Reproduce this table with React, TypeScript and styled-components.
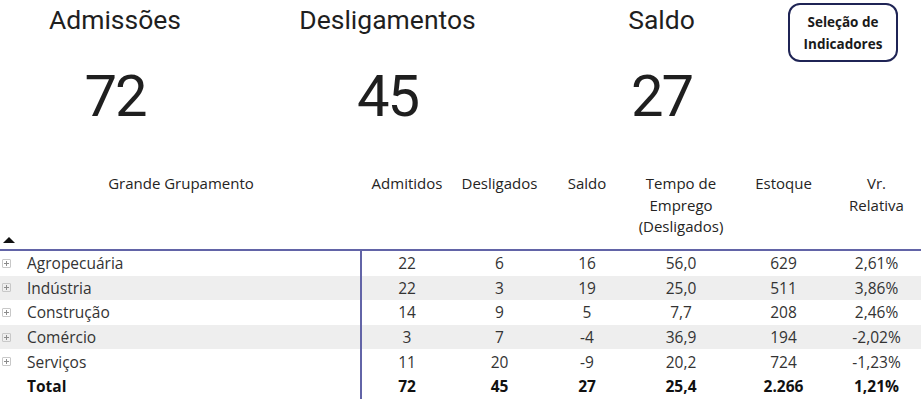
import React from 'react'
import styled, { createGlobalStyle } from 'styled-components'

const GlobalStyle = createGlobalStyle`
  body {
    margin: 0;
    background: #ffffff;
  }
`

const COLS = '362px 90px 95px 80px 108px 97px 89px'
const LINE = '#6264a7'

const Page = styled.div`
  width: 921px;
  height: 409px;
  overflow: hidden;
  background: #ffffff;
  color: #252423;
`
const KpiRow = styled.div`
  display: grid;
  grid-template-columns: 230px 315px 233px 1fr;
  height: 172px;
`
const Kpi = styled.div`
  display: flex;
  flex-direction: column;
  align-items: center;
  font-family: Roboto, 'DejaVu Sans', sans-serif;
  font-weight: 400;
  color: #1f1f1f;
`
const KpiTitle = styled.div`
  font-size: 26.5px;
  line-height: 32px;
  margin-top: 4px;
`
const KpiValue = styled.div`
  font-size: 58px;
  line-height: 70px;
  margin-top: 25px;
  letter-spacing: -2px;
`
const ButtonCell = styled.div`
  padding: 3px 0 0 10px;
`
const IndicatorButton = styled.button`
  width: 110px;
  height: 59px;
  box-sizing: border-box;
  border: 2px solid #1f2455;
  border-radius: 12px;
  background: #ffffff;
  font-family: 'Open Sans', sans-serif;
  font-weight: 700;
  font-size: 13.5px;
  line-height: 22px;
  color: #1a1a1a;
  padding: 0;
`
const Table = styled.div`
  font-family: 'Open Sans', sans-serif;
  color: #252423;
`
const HeaderRow = styled.div`
  display: grid;
  grid-template-columns: ${COLS};
  height: 77px;
  border-bottom: 2px solid ${LINE};
`
const HeadCell = styled.div`
  display: flex;
  flex-direction: column;
  align-items: center;
  text-align: center;
  font-size: 15px;
  line-height: 21.5px;
  padding-top: 1px;
`
const FirstHead = styled(HeadCell)`
  align-items: stretch;
`
const SortArrow = styled.div`
  margin-top: auto;
  margin-bottom: 6px;
  margin-left: 3px;
  width: 0;
  height: 0;
  border-left: 6px solid transparent;
  border-right: 6px solid transparent;
  border-bottom: 6px solid #111111;
`
const Row = styled.div<{ $shaded?: boolean; $bold?: boolean }>`
  display: grid;
  grid-template-columns: ${COLS};
  height: 24.6px;
  align-items: center;
  background: ${({ $shaded }) => ($shaded ? '#eeeeee' : 'transparent')};
  font-size: 15.5px;
  font-weight: ${({ $bold }) => ($bold ? 700 : 400)};
  color: ${({ $bold }) => ($bold ? '#111111' : '#333333')};
`
const LabelCell = styled.div`
  display: flex;
  align-items: center;
  height: 100%;
  border-right: 2px solid ${LINE};
  box-sizing: border-box;
  padding-left: 2px;
  gap: 16px;
`
const Expand = styled.span<{ $hidden?: boolean }>`
  width: 9px;
  height: 9px;
  box-sizing: border-box;
  border: 1px solid #c8c8c8;
  border-radius: 1px;
  position: relative;
  flex: none;
  visibility: ${({ $hidden }) => ($hidden ? 'hidden' : 'visible')};
  &::before,
  &::after {
    content: '';
    position: absolute;
    background: #8c8c8c;
  }
  &::before {
    left: 1px;
    right: 1px;
    top: 3px;
    height: 1px;
  }
  &::after {
    top: 1px;
    bottom: 1px;
    left: 3px;
    width: 1px;
  }
`
const Value = styled.div`
  text-align: center;
`

const kpis = [
  { title: 'Admissões', value: '72' },
  { title: 'Desligamentos', value: '45' },
  { title: 'Saldo', value: '27' },
]

const headers = [
  ['Admitidos'],
  ['Desligados'],
  ['Saldo'],
  ['Tempo de', 'Emprego', '(Desligados)'],
  ['Estoque'],
  ['Vr.', 'Relativa'],
]

const rows = [
  ['Agropecuária', '22', '6', '16', '56,0', '629', '2,61%'],
  ['Indústria', '22', '3', '19', '25,0', '511', '3,86%'],
  ['Construção', '14', '9', '5', '7,7', '208', '2,46%'],
  ['Comércio', '3', '7', '-4', '36,9', '194', '-2,02%'],
  ['Serviços', '11', '20', '-9', '20,2', '724', '-1,23%'],
]

const total = ['Total', '72', '45', '27', '25,4', '2.266', '1,21%']

const App: React.FC = () => (
  <Page>
    <GlobalStyle />
    <KpiRow>
      {kpis.map(k => (
        <Kpi key={k.title}>
          <KpiTitle>{k.title}</KpiTitle>
          <KpiValue>{k.value}</KpiValue>
        </Kpi>
      ))}
      <ButtonCell>
        <IndicatorButton>
          Seleção de
          <br />
          Indicadores
        </IndicatorButton>
      </ButtonCell>
    </KpiRow>
    <Table>
      <HeaderRow>
        <FirstHead>
          <div>Grande Grupamento</div>
          <SortArrow />
        </FirstHead>
        {headers.map(lines => (
          <HeadCell key={lines.join(' ')}>
            {lines.map(l => (
              <div key={l}>{l}</div>
            ))}
          </HeadCell>
        ))}
      </HeaderRow>
      {rows.map(([label, ...values], i) => (
        <Row key={label} $shaded={i % 2 === 1}>
          <LabelCell>
            <Expand />
            {label}
          </LabelCell>
          {values.map((v, j) => (
            <Value key={j}>{v}</Value>
          ))}
        </Row>
      ))}
      <Row $bold>
        <LabelCell>
          <Expand $hidden />
          {total[0]}
        </LabelCell>
        {total.slice(1).map((v, j) => (
          <Value key={j}>{v}</Value>
        ))}
      </Row>
    </Table>
  </Page>
)

export default App
